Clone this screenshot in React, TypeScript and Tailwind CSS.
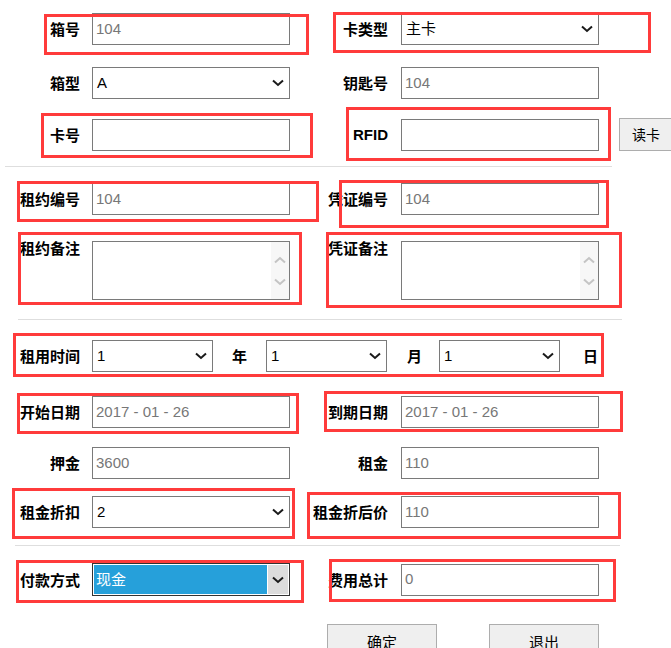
import React from "react";

const labelFont = { fontFamily: '"Noto Sans CJK SC", "Liberation Sans", sans-serif' };

const Chevron: React.FC<{ up?: boolean; color?: string }> = ({ up, color = "#1a1a1a" }) => (
    <svg width="12" height="8" viewBox="0 0 12 8" className="shrink-0">
        <path
            d={up ? "M1 6.5 L6 2 L11 6.5" : "M1 1.5 L6 6 L11 1.5"}
            stroke={color}
            strokeWidth="2"
            fill="none"
        />
    </svg>
);

const Label: React.FC<{ text: string; right?: boolean; top?: boolean }> = ({ text, right, top }) => (
    <div
        className={`${right ? "w-[98px]" : "w-[80px]"} shrink-0 text-right text-[15px] font-bold text-black leading-[18px] whitespace-nowrap ${top ? "self-start -mt-[2px]" : ""}`}
        style={labelFont}
    >
        {text}
    </div>
);

const TextBox: React.FC<{ value?: string; right?: boolean }> = ({ value, right }) => (
    <div
        className={`${right ? "ml-[13px]" : "ml-[12px]"} shrink-0 w-[198px] h-[32px] border border-[#7a7a7a] bg-white flex items-center pl-[3px] text-[15px] text-[#777]`}
        style={{ fontFamily: '"Liberation Sans", Arial, sans-serif' }}
    >
        {value}
    </div>
);

const SelectBox: React.FC<{ value: string; className: string }> = ({ value, className }) => (
    <div
        className={`${className} shrink-0 h-[32px] border border-[#7a7a7a] bg-white flex items-center justify-between pl-[4px] pr-[5px] text-[15px] text-black`}
        style={{ fontFamily: '"Liberation Sans", "Noto Sans CJK SC", sans-serif' }}
    >
        <span>{value}</span>
        <Chevron />
    </div>
);

const AreaBox: React.FC<{ right?: boolean }> = ({ right }) => (
    <div className={`${right ? "ml-[13px]" : "ml-[12px]"} shrink-0 w-[198px] h-[59px] border border-[#7a7a7a] bg-white flex justify-end`}>
        <div className="w-[18px] h-full bg-[#f7f7f7] flex flex-col items-center justify-center gap-[14px]">
            <Chevron up color="#c4c4c4" />
            <Chevron color="#c4c4c4" />
        </div>
    </div>
);

const redBoxes = [
    "left-[44px] top-[14px] w-[265px] h-[41px]",
    "left-[333px] top-[12px] w-[318px] h-[41px]",
    "left-[41px] top-[113px] w-[272px] h-[45px]",
    "left-[346px] top-[107px] w-[265px] h-[54px]",
    "left-[17px] top-[181px] w-[302px] h-[41px]",
    "left-[339px] top-[180px] w-[270px] h-[48px]",
    "left-[18px] top-[232px] w-[284px] h-[73px]",
    "left-[326px] top-[232px] w-[296px] h-[76px]",
    "left-[13px] top-[333px] w-[591px] h-[44px]",
    "left-[17px] top-[393px] w-[282px] h-[41px]",
    "left-[324px] top-[391px] w-[299px] h-[41px]",
    "left-[12px] top-[488px] w-[283px] h-[51px]",
    "left-[307px] top-[492px] w-[314px] h-[47px]",
    "left-[16px] top-[560px] w-[288px] h-[43px]",
    "left-[329px] top-[559px] w-[287px] h-[43px]",
];

const Unit: React.FC<{ text: string; className: string }> = ({ text, className }) => (
    <div className={`${className} shrink-0 text-[15px] font-bold text-black`} style={labelFont}>
        {text}
    </div>
);

export default function App() {
    return (
        <div className="relative w-[671px] min-h-[648px] bg-white overflow-hidden">
            <div className="flex flex-col pt-[13px]">
                <div className="flex items-center">
                    <Label text="箱号" />
                    <TextBox value="104" />
                    <Label text="卡类型" right />
                    <SelectBox value="主卡" className="ml-[13px] w-[198px]" />
                </div>

                <div className="flex items-center mt-[22px]">
                    <Label text="箱型" />
                    <SelectBox value="A" className="ml-[12px] w-[198px]" />
                    <Label text="钥匙号" right />
                    <TextBox value="104" right />
                </div>

                <div className="flex items-center mt-[19px]">
                    <Label text="卡号" />
                    <TextBox />
                    <div
                        className="w-[98px] shrink-0 text-right text-[15px] font-bold leading-[18px]"
                        style={{ fontFamily: '"Liberation Sans", Arial, sans-serif' }}
                    >
                        RFID
                    </div>
                    <TextBox right />
                    <button
                        className="ml-[20px] shrink-0 w-[60px] h-[33px] border border-[#adadad] bg-[#efefef] text-[14px] text-black text-left pl-[12px]"
                        style={labelFont}
                    >
                        读卡
                    </button>
                </div>

                <div className="ml-[5px] w-[607px] h-px bg-[#dedede] mt-[15px]" />

                <div className="flex items-center mt-[16px]">
                    <Label text="租约编号" />
                    <TextBox value="104" />
                    <Label text="凭证编号" right />
                    <TextBox value="104" right />
                </div>

                <div className="flex items-start mt-[26px]">
                    <Label text="租约备注" top />
                    <AreaBox />
                    <Label text="凭证备注" right top />
                    <AreaBox right />
                </div>

                <div className="ml-[18px] w-[604px] h-px bg-[#dedede] mt-[19px]" />

                <div className="flex items-center mt-[20px]">
                    <Label text="租用时间" />
                    <SelectBox value="1" className="ml-[12px] w-[121px]" />
                    <Unit text="年" className="ml-[19px]" />
                    <SelectBox value="1" className="ml-[19px] w-[121px]" />
                    <Unit text="月" className="ml-[20px]" />
                    <SelectBox value="1" className="ml-[17px] w-[121px]" />
                    <Unit text="日" className="ml-[23px]" />
                </div>

                <div className="flex items-center mt-[24px]">
                    <Label text="开始日期" />
                    <TextBox value="2017 - 01 - 26" />
                    <Label text="到期日期" right />
                    <TextBox value="2017 - 01 - 26" right />
                </div>

                <div className="flex items-center mt-[19px]">
                    <Label text="押金" />
                    <TextBox value="3600" />
                    <Label text="租金" right />
                    <TextBox value="110" right />
                </div>

                <div className="flex items-center mt-[17px]">
                    <Label text="租金折扣" />
                    <SelectBox value="2" className="ml-[12px] w-[198px]" />
                    <Label text="租金折后价" right />
                    <TextBox value="110" right />
                </div>

                <div className="ml-[15px] w-[605px] h-px bg-[#dedede] mt-[17px]" />

                <div className="flex items-center mt-[17px]">
                    <Label text="付款方式" />
                    <div className="ml-[12px] shrink-0 w-[198px] h-[33px] border border-[#333] bg-white flex p-[1px]">
                        <div
                            className="flex-1 bg-[#26a0da] text-white text-[15px] flex items-center pl-[2px]"
                            style={labelFont}
                        >
                            现金
                        </div>
                        <div className="w-[20px] ml-[1px] bg-[#dcdcdc] flex items-center justify-center">
                            <Chevron />
                        </div>
                    </div>
                    <Label text="费用总计" right />
                    <TextBox value="0" right />
                </div>

                <div className="flex mt-[28px]">
                    <button
                        className="ml-[327px] shrink-0 w-[110px] h-[36px] border border-[#adadad] bg-[#efefef] text-[15px] text-black"
                        style={labelFont}
                    >
                        确定
                    </button>
                    <button
                        className="ml-[52px] shrink-0 w-[110px] h-[36px] border border-[#adadad] bg-[#efefef] text-[15px] text-black"
                        style={labelFont}
                    >
                        退出
                    </button>
                </div>
            </div>

            {redBoxes.map((cls, i) => (
                <div key={i} className={`absolute pointer-events-none border-[3px] border-[#ff3b3b] ${cls}`} />
            ))}
        </div>
    );
}
